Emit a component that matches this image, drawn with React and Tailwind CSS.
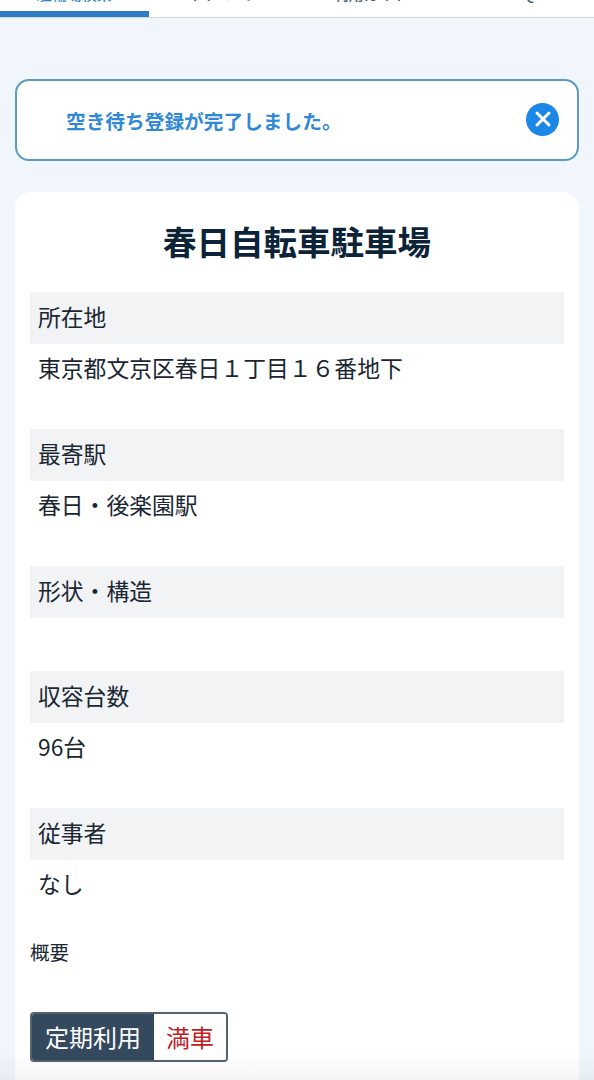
import React from 'react';
import { X } from 'lucide-react';

const tabs = [
  { label: '駐輪場検索', active: true },
  { label: 'マイページ' },
  { label: '利用ガイド' },
  { label: 'FAQ' },
];

const rows = [
  { label: '所在地', value: '東京都文京区春日１丁目１６番地下' },
  { label: '最寄駅', value: '春日・後楽園駅' },
  { label: '形状・構造', value: '' },
  { label: '収容台数', value: '96台' },
  { label: '従事者', value: 'なし' },
];

const App = () => {
  return (
    <div className="relative h-[1080px] w-[594px] overflow-hidden bg-[#f1f6fd] font-['Noto_Sans_CJK_JP','Noto_Sans',sans-serif] text-[#1a2733]">
      {/* tab bar, scrolled mostly out of view */}
      <nav className="flex h-[18px] items-end border-b border-[#d4d9de] bg-white">
        {tabs.map((tab) => (
          <div
            key={tab.label}
            className={`flex h-[50px] w-[148.5px] shrink-0 items-end justify-center border-b-[6px] pb-[5px] text-[15px] font-medium leading-[24px] ${tab.active ? 'border-[#2f7bc4] text-[#2f7fc4]' : 'border-transparent text-[#4a6072]'}`}
          >
            <span>{tab.label}</span>
          </div>
        ))}
      </nav>

      <main className="px-[15px] pt-[61px]">
        <div className="flex h-[82px] items-center justify-between rounded-[14px] border-2 border-[#5b9cc4] bg-white pl-[49px] pr-[18px]">
          <p className="pt-[2px] text-[19.7px] font-bold text-[#3089d6]">空き待ち登録が完了しました。</p>
          <button className="mb-[2px] flex h-[33px] w-[33px] items-center justify-center rounded-full bg-[#1b87e6] text-white">
            <X className="h-[24px] w-[24px]" strokeWidth={3} />
          </button>
        </div>

        <section className="mt-[31px] rounded-[16px] bg-white px-[15px] pb-[40px] pt-[23px]">
          <h1 className="mb-[25px] text-center text-[33.5px] font-bold leading-[52px] text-[#0d2438]">春日自転車駐車場</h1>

          {rows.map((row) => (
            <div key={row.label} className="mb-[45px]">
              <h2 className="flex h-[52px] items-center bg-[#f1f3f5] px-[8px] pb-[1px] text-[22.8px] font-normal">{row.label}</h2>
              <p className="min-h-[8px] px-[8px] pt-[7px] text-[22.8px] leading-[33px]">{row.value}</p>
            </div>
          ))}

          <p className="-mt-[7px] text-[19.5px] leading-[28px]">概要</p>

          <div className="mt-[46px] flex h-[50px] w-[198px] overflow-hidden rounded-[4px] border-2 border-[#566270] text-[24px]">
            <span className="flex w-[122px] items-center justify-center bg-[#34495e] text-white">定期利用</span>
            <span className="flex flex-1 items-center justify-center bg-white text-[#c0201f]">満車</span>
          </div>
        </section>
      </main>

      {/* shadow of the bar below the fold */}
      <div className="absolute inset-x-0 bottom-0 h-[30px] bg-gradient-to-b from-transparent to-[#0000000a]" />
    </div>
  );
};

export default App;
